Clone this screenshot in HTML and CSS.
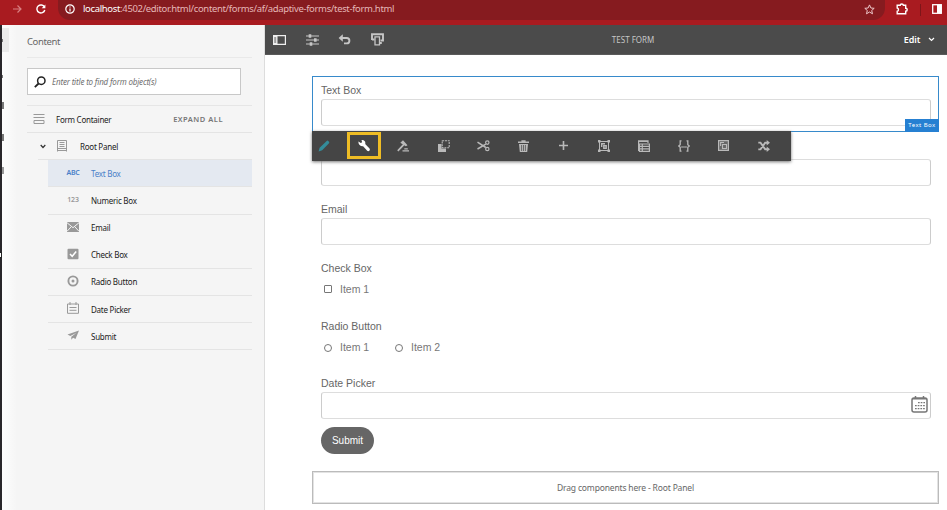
FILE: index.html
```html
<!DOCTYPE html>
<html lang="en">
<head>
<meta charset="utf-8">
<title>Test Form</title>
<link rel="stylesheet" href="styles.css">
</head>
<body>
<header class="browser">
  <svg class="nav-forward" width="10" height="10" viewBox="0 0 10 10"><path d="M1 5h8M5.500 1.500L9 5 5.500 8.500" fill="none" stroke="currentColor" stroke-width="1.200"/></svg>
  <svg class="nav-reload" width="10" height="10" viewBox="0 0 10 10"><path d="M8.500 3.200A4 4 0 1 0 8.800 6" fill="none" stroke="currentColor" stroke-width="1.400"/><path d="M9.400.6v3.700H5.700z" fill="currentColor"/></svg>
  <div class="address">
    <svg class="site-info" width="10" height="10" viewBox="0 0 10 10"><circle cx="5" cy="5" r="4.200" fill="none" stroke="currentColor" stroke-width="1.200"/><path d="M5 4.500v3M5 2.400v1.200" stroke="currentColor" stroke-width="1.200"/></svg>
    <span class="url"><span class="host">localhost</span>:4502/editor.html/content/forms/af/adaptive-forms/test-form.html</span>
    <svg class="star" width="11" height="11" viewBox="0 0 11 11"><path d="M5.500.9l1.400 3.100 3.300.3-2.500 2.200.8 3.300-3-1.800-3 1.800.8-3.300L.8 4.300l3.300-.3z" fill="none" stroke="currentColor"/></svg>
  </div>
  <svg class="extensions" width="12" height="12" viewBox="0 0 12 12"><path d="M1.200 2.300h3a1.600 1.300 0 0 1 3.200 0h2.300v2.900a1.500 1.500 0 0 1 0 3v2.600H1.200V8.300a1.700 1.700 0 0 0 0-3.300z" fill="none" stroke="currentColor" stroke-width="1.400"/></svg>
  <span class="separator"></span>
  <svg class="side-panel" width="10" height="10" viewBox="0 0 10 10"><rect x=".7" y=".7" width="8.600" height="8.600" fill="none" stroke="currentColor" stroke-width="1.300"/><path d="M5 1h4.500v8H5z" fill="currentColor"/></svg>
</header>
<div class="workspace">
  <div class="rail"><i class="rail-tab"></i><i class="mark mark-a"></i><i class="mark mark-b"></i><i class="mark mark-c"></i><i class="mark mark-d"></i><i class="mark mark-e"></i><i class="handle"></i></div>
  <aside class="sidebar">
    <h2>Content</h2>
    <div class="search">
      <svg width="12" height="12" viewBox="0 0 12 12"><circle cx="7.300" cy="4.700" r="3.700" fill="none" stroke="currentColor" stroke-width="1.500"/><path d="M4.600 7.500L.8 11.200" stroke="currentColor" stroke-width="1.800"/></svg>
      <span>Enter title to find form object(s)</span>
    </div>
    <div class="tree">
      <div class="row container">
        <svg width="12" height="12" viewBox="0 0 12 12"><path d="M.5 1.500h11M.5 4.500h11M1 7.500h10v3H1z" fill="none" stroke="currentColor"/></svg>
        <span class="name">Form Container</span><span class="expand">EXPAND ALL</span>
      </div>
      <div class="row root">
        <svg class="twisty" width="6" height="5" viewBox="0 0 6 5"><path d="M.7 1L3 3.500 5.300 1" fill="none" stroke="currentColor" stroke-width="1.200"/></svg>
        <svg width="12" height="12" viewBox="0 0 12 12"><path d="M1.500.5h9v8h-9zM3.500 2.500h5M3.500 4.500h5M3.500 6.500h5M1.500 8v3.500M10.500 8v3.500M1.500 10.500h9" fill="none" stroke="currentColor"/></svg>
        <span class="name">Root Panel</span>
      </div>
      <div class="row leaf selected"><span class="glyph">ABC</span><span class="name">Text Box</span></div>
      <div class="row leaf"><span class="glyph">123</span><span class="name">Numeric Box</span></div>
      <div class="row leaf open"><span class="glyph"><svg width="12" height="10" viewBox="0 0 12 10"><path d="M0 0h12v10H0z" fill="currentColor"/><path d="M0 .7l6 5 6-5M0 9.300l4.200-4.500M12 9.300L7.800 4.800" fill="none" stroke="#f5f5f5"/></svg></span><span class="name">Email</span></div>
      <div class="row leaf"><span class="glyph"><svg width="12" height="12" viewBox="0 0 12 12"><rect x=".5" y=".8" width="11" height="10.400" rx="1" fill="currentColor"/><path d="M3 6l2.200 2.300L9.200 3.500" fill="none" stroke="#fff" stroke-width="1.500"/></svg></span><span class="name">Check Box</span></div>
      <div class="row leaf"><span class="glyph"><svg width="12" height="12" viewBox="0 0 12 12"><circle cx="6" cy="6" r="4.600" fill="none" stroke="currentColor" stroke-width="1.900"/><circle cx="6" cy="6" r="1.500" fill="currentColor"/></svg></span><span class="name">Radio Button</span></div>
      <div class="row leaf"><span class="glyph"><svg width="12" height="12" viewBox="0 0 12 12"><path d="M.5 2h11v9.300H.5zM3 0v3M9 0v3M2.500 5.500h7M2.500 8.300h7" fill="none" stroke="currentColor"/></svg></span><span class="name">Date Picker</span></div>
      <div class="row leaf"><span class="glyph"><svg width="12" height="11" viewBox="0 0 12 11"><path d="M12 .5L.5 4.600l2.800 1.300L9.500 2.700 4.300 6.700v3l1.800-1.900 2.400 1.100z" fill="currentColor"/></svg></span><span class="name">Submit</span></div>
    </div>
  </aside>
  <main class="editor">
    <div class="topbar">
      <svg class="panel-icon" width="13" height="10" viewBox="0 0 13 10"><path d="M.6.6h11.800v8.800H.6z" fill="none" stroke="currentColor" stroke-width="1.200"/><path d="M0 0h4.500v10H0z" fill="currentColor"/><path d="M1.200 3h2M1.200 5h2M1.200 7h2" stroke="#4b4b4b"/></svg>
      <svg width="13" height="12" viewBox="0 0 13 12"><path d="M0 2h13M0 6h13M0 10h13" stroke="currentColor"/><path d="M4 .3v3.400M9.300 4.300v3.400M5 8.300v3.400" stroke="currentColor" stroke-width="2.600"/></svg>
      <svg width="13" height="11" viewBox="0 0 13 11"><path d="M2 4h6.700a2.700 2.700 0 0 1 0 5.400H6" fill="none" stroke="currentColor" stroke-width="1.900"/><path d="M4.800.3v7.400L.6 4z" fill="currentColor"/></svg>
      <svg width="13" height="13" viewBox="0 0 13 13"><path d="M1 7V1.200h11v6.300H9.500M1 6.500h2.500M8.800 10h2" fill="none" stroke="currentColor" stroke-width="1.900"/><path d="M4 3.800h4.500v8H4z" fill="#4b4b4b" stroke="currentColor" stroke-width="1.300"/></svg>
      <span class="title">TEST FORM</span>
      <span class="mode">Edit</span>
      <svg class="mode-arrow" width="7" height="5" viewBox="0 0 7 5"><path d="M1 1l2.500 2.500L6 1" fill="none" stroke="currentColor" stroke-width="1.200"/></svg>
    </div>
    <div class="canvas">
      <section class="field active">
        <label>Text Box</label><div class="input"></div><span class="badge">Text Box</span>
        <div class="actions">
          <span class="edit"><svg width="12" height="12" viewBox="0 0 12 12"><path d="M.6 11.400l1-3.600L8.700.9q.8-.6 1.500.1l.8.8q.6.7 0 1.400L4.200 10.300z" fill="currentColor"/></svg></span>
          <span class="configure"><svg width="12" height="12" viewBox="0 0 12 12"><path d="M.4 1.600l2.400 1.500 1.300-.8L3.500 0c2.800-.2 4.400 1.600 3.700 4l4.300 4.600c1.200 1.400-.8 3.500-2.300 2.200L5.100 6.300C2.300 6.500.2 4.400.4 1.600z" fill="currentColor"/></svg></span>
          <span><svg width="13" height="12" viewBox="0 0 13 12"><path d="M3.300 2.700L6 .3l4.500 5-1.700 1z" fill="currentColor"/><path d="M7.200 4.200L.8 10.800" stroke="currentColor" stroke-width="1.700"/><path d="M5.500 10.900H12M7.300 8.900h3.500" stroke="currentColor" stroke-width="1.400"/></svg></span>
          <span><svg width="12" height="12" viewBox="0 0 12 12"><path d="M0 4h3.500v4.500H8V12H0z" fill="currentColor"/><path d="M4.200.7h7v7h-7z" fill="none" stroke="currentColor" stroke-width="1.100" stroke-dasharray="2 .8"/></svg></span>
          <span><svg width="13" height="12" viewBox="0 0 13 12"><path d="M.5 2.200l8.300 5.300M.5 9l8.300-4.800" stroke="currentColor" stroke-width="1.500"/><g fill="none" stroke="currentColor" stroke-width="1.200"><circle cx="10.300" cy="2.600" r="1.700"/><circle cx="10.300" cy="9" r="1.700"/></g></svg></span>
          <span><svg width="11" height="12" viewBox="0 0 11 12"><path d="M0 1.600h3.400V.2h4.200v1.400H11V3H0zM1 4h9l-.8 8H1.800z" fill="currentColor"/><path d="M3.600 5v6M5.500 5v6M7.400 5v6" stroke="#454545" stroke-width=".7"/></svg></span>
          <span><svg width="9" height="9" viewBox="0 0 9 9"><path d="M4.500 0v9M0 4.500h9" stroke="currentColor" stroke-width="1.600"/></svg></span>
          <span><svg width="12" height="12" viewBox="0 0 12 12"><path d="M1.500 1.500h9v9h-9z" fill="none" stroke="currentColor"/><path d="M0 0h2.500v2.500H0zM9.500 0H12v2.500H9.500zM0 9.500h2.500V12H0zM9.500 9.500H12V12H9.500z" fill="currentColor"/><path d="M3.700 7V3.700H7M5.800 5.800h2.400v2.400H5.800z" fill="none" stroke="currentColor" stroke-width="1.400"/></svg></span>
          <span><svg width="12" height="12" viewBox="0 0 12 12"><path d="M.6 11V.8h9.400V3M0 1.500h10M1.500 4h9.900v7.300H1.500zM1 6.400h10M1 8.800h10M4.300 4v7" fill="none" stroke="currentColor" stroke-width="1.200"/></svg></span>
          <span><svg width="12" height="12" viewBox="0 0 12 12"><path d="M3.500.8H2.200v4L.7 6l1.500 1.200v4h1.300M8.500.8h1.300v4L11.300 6 9.800 7.200v4H8.500" fill="none" stroke="currentColor" stroke-width="1.300"/><path d="M3.400 7h1.300M5.350 7h1.300M7.300 7h1.300" stroke="currentColor" stroke-width="1.400"/></svg></span>
          <span><svg width="11" height="11" viewBox="0 0 11 11"><path d="M.6.6h9.800v9.800H.6z" fill="#666" stroke="currentColor" stroke-width="1.200"/><path d="M2.600 6V2.500H6M4.500 4.500h4v4h-4z" fill="none" stroke="currentColor" stroke-width="1.100"/></svg></span>
          <span><svg width="12" height="12" viewBox="0 0 12 12"><path d="M.3 2.600h2.200l4.700 6.700h2M.3 9.400h2.200l4.700-6.700h2" fill="none" stroke="currentColor" stroke-width="1.900"/><path d="M8.700 0v5.400L12 2.700zM8.700 6.600V12L12 9.300z" fill="currentColor"/></svg></span>
        </div>
      </section>
      <section class="field numeric"><label>Numeric Box</label><div class="input"></div></section>
      <section class="field"><label>Email</label><div class="input"></div></section>
      <section class="field choice"><label>Check Box</label><div class="options"><span class="option"><i class="box"></i>Item 1</span></div></section>
      <section class="field choice radio"><label>Radio Button</label><div class="options"><span class="option"><i class="dot"></i>Item 1</span><span class="option"><i class="dot"></i>Item 2</span></div></section>
      <section class="field date"><label>Date Picker</label><div class="input"><svg width="17" height="17" viewBox="0 0 17 17"><rect x="1" y="2" width="15" height="14" rx="2" fill="none" stroke="currentColor" stroke-width="1.500"/><path d="M1 2.800h15M4.500 0v3M12.500 0v3" stroke="currentColor" stroke-width="1.500"/><path d="M7 6.700h7M4 9.700h10M4 12.700h10" stroke="currentColor" stroke-width="1.300" stroke-dasharray="1.700 1"/></svg></div></section>
      <button class="submit">Submit</button>
      <div class="dropzone">Drag components here - Root Panel</div>
    </div>
  </main>
</div>
</body>
</html>
```
FILE: styles.css
```css
* { box-sizing: border-box; }
body { margin: 0; width: 947px; height: 510px; overflow: hidden; background: #fff; font-family: "Noto Sans", sans-serif; }
svg { display: block; flex: none; }
.browser { height: 25px; background: #a91b20; display: flex; align-items: flex-start; color: #fff; padding-left: 12px; }
.nav-forward { margin-top: 4px; color: #d98082; }
.nav-reload { margin: 4px 0 0 14px; }
.address { height: 20px; width: 827px; flex: none; margin-left: 12px; background: #861b1f; border-radius: 0 0 12px 12px; display: flex; padding: 0 10px 0 7px; }
.site-info { margin-top: 4px; }
.url { margin-left: 8px; font-size: 9.500px; letter-spacing: -.34px; line-height: 18px; color: #e5b7b8; white-space: nowrap; }
.host { color: #fff; }
.star { margin: 4px 0 0 auto; color: #edc8ca; }
.extensions { margin: 3px 0 0 11px; }
.separator { width: 1px; height: 12px; margin: 4px 0 0 12px; background: #7e1519; }
.side-panel { margin: 4px 0 0 11px; }
.workspace { display: flex; height: 485px; }
.rail { position: relative; width: 17px; flex: none; border-left: 2px solid #29272b; background: linear-gradient(90deg, #fdfdfd, #f5f5f5); }
.rail-tab { display: block; width: 7px; height: 24px; margin-top: 3px; background: #ebebeb; }
.mark { position: absolute; left: 0; width: 2px; height: 7px; background: #777; }
.mark-a { top: 14px; height: 3px; width: 1px; }
.mark-b { top: 50px; height: 3px; width: 1px; }
.mark-c { top: 77px; }
.mark-d { top: 109px; }
.mark-e { top: 142px; background: #999; }
.handle { position: absolute; left: -2px; top: 227px; width: 2px; height: 6px; background: #fff; border: 1px solid #222; border-left: 0; }
.sidebar { width: 248px; flex: none; background: #f5f5f5; border-right: 1px solid #ddd; padding: 0 12px 0 10px; }
.sidebar h2 { margin: 0; height: 33px; font-size: 9.500px; letter-spacing: -.4px; font-weight: 400; color: #666; line-height: 33px; border-bottom: 1px solid #e9e9e9; }
.search { width: 214px; height: 27px; margin-top: 10px; border: 1px solid #c8c8c8; background: #fff; display: flex; align-items: center; padding-left: 6px; color: #222; }
.search span { margin-left: 6px; color: #707070; font: italic 8px "Noto Sans", sans-serif; letter-spacing: -.17px; white-space: nowrap; }
.tree { margin-top: 10px; border-top: 1px solid #e6e6e6; }
.row { height: 27.150px; border-bottom: 1px solid #e4e4e4; display: flex; align-items: center; color: #999; }
.open { border-bottom-color: transparent; }
.name { color: #222; font-size: 8px; letter-spacing: -.25px; white-space: nowrap; }
.container { padding-left: 6px; }
.container .name { margin-left: 11px; }
.expand { margin-left: auto; margin-right: 29px; font-size: 7.500px; font-weight: 600; color: #777; letter-spacing: .5px; }
.root { margin-left: 11px; padding-left: 2px; }
.twisty { color: #333; }
.root .twisty + svg { margin-left: 10px; }
.root .name { margin-left: 12px; }
.leaf { margin-left: 21px; padding-left: 19px; }
.glyph { width: 12px; margin-right: 12px; display: flex; justify-content: center; font-size: 7px; letter-spacing: -.2px; font-weight: 600; padding-bottom: 2px; }
.selected { background: #e4e9f1; color: #4a80c8; }
.selected .name { color: #4a80c8; }
.editor { flex: 1; min-width: 0; }
.topbar { height: 30px; background: #4b4b4b; display: flex; align-items: center; gap: 19.500px; color: #c6c6c6; padding: 0 12px 0 8px; border-bottom: 1px solid #5a5a5a; }
.panel-icon { color: #eee; }
.title { margin-left: auto; margin-right: auto; padding-right: 21px; font-size: 8px; white-space: nowrap; }
.mode { color: #fff; font-size: 9px; font-weight: 600; }
.mode-arrow { margin-left: -12px; color: #fff; }
.canvas { padding: 21px 8px 0 47px; font-family: "Liberation Sans", Arial, sans-serif; color: #666; }
.field { padding: 0 8px 0 9px; height: 59px; }
.field label { display: block; font-size: 10.500px; line-height: 18px; }
.input { height: 27px; border: 1px solid #ddd; border-left-color: #ccc; border-right-color: #ccc; border-radius: 3px; }
.active { position: relative; height: 56px; border: 1px solid #378acb; padding: 5px 7px 0 8px; }
.active label { line-height: 17px; }
.badge { position: absolute; right: -1px; bottom: -1px; width: 34px; height: 13px; background: #2680d2; color: #fff; font: 6px/13px "Noto Sans", sans-serif; letter-spacing: .45px; text-align: center; white-space: nowrap; }
.actions { position: absolute; z-index: 1; left: -1px; top: 54px; width: 479px; height: 30px; background: #454545; display: flex; box-shadow: 0 1px 3px #777; color: #b9b9b9; }
.actions span { width: 40px; flex: none; display: flex; align-items: center; justify-content: center; padding: 0 1px 1px 0; }
.actions .edit { width: 35px; padding-right: 12px; color: #348c9a; }
.actions .configure { width: 34px; height: 27px; margin-top: 1px; border: 3px solid #efbd25; color: #fff; padding: 0; margin-right: 3px; }
.numeric { margin-top: 9px; }
.choice { height: 58px; }
.options { display: flex; font-size: 10.500px; color: #777; line-height: 14px; margin-top: 5px; }
.option { display: flex; align-items: center; width: 71px; padding-left: 3px; }
.box, .dot { width: 8px; height: 8px; border: 1px solid #777; margin-right: 8px; border-radius: 1px; }
.dot { border-radius: 50%; position: relative; top: 1px; }
.date { height: 52px; }
.date label { line-height: 17px; }
.date .input { display: flex; justify-content: flex-end; padding: 3px 2px; color: #777; }
.submit { display: block; width: 53px; height: 27px; margin-left: 9px; border: 0; border-radius: 14px; background: #666; color: #fff; font: 10px "Liberation Sans", sans-serif; padding: 0; }
.dropzone { margin-top: 17px; height: 33px; border: 1px solid #bbb; outline: 1px solid #e3e3e3; outline-offset: -2px; display: flex; align-items: center; justify-content: center; font: 8.500px "Noto Sans", sans-serif; letter-spacing: -.16px; color: #666; }
```
